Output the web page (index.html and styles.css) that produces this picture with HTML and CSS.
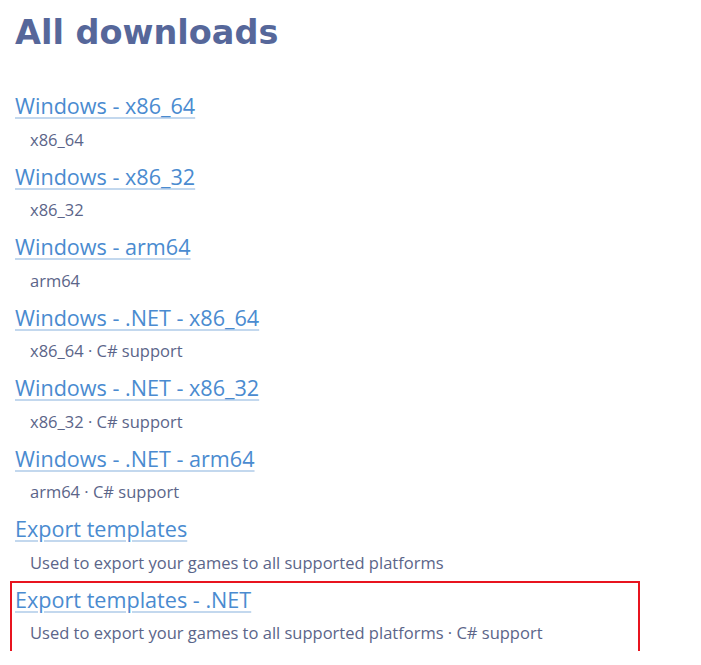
FILE: index.html
```html
<!DOCTYPE html>
<html lang="en">
<head>
<meta charset="utf-8">
<title>All downloads</title>
<link rel="stylesheet" href="styles.css">
</head>
<body>
<main class="page">
  <h1 class="title">All downloads</h1>
  <ul class="list">
    <li class="item"><a class="link" href="#">Windows - x86_64</a><div class="desc">x86_64</div></li>
    <li class="item"><a class="link" href="#">Windows - x86_32</a><div class="desc">x86_32</div></li>
    <li class="item"><a class="link" href="#">Windows - arm64</a><div class="desc">arm64</div></li>
    <li class="item"><a class="link" href="#">Windows - .NET - x86_64</a><div class="desc">x86_64 · C# support</div></li>
    <li class="item"><a class="link" href="#">Windows - .NET - x86_32</a><div class="desc">x86_32 · C# support</div></li>
    <li class="item"><a class="link" href="#">Windows - .NET - arm64</a><div class="desc">arm64 · C# support</div></li>
    <li class="item"><a class="link" href="#">Export templates</a><div class="desc">Used to export your games to all supported platforms</div></li>
    <li class="item item-highlight"><a class="link" href="#">Export templates - .NET</a><div class="desc">Used to export your games to all supported platforms · C# support</div></li>
  </ul>
</main>
</body>
</html>
```
FILE: styles.css
```css
html, body {
  margin: 0;
  padding: 0;
  background: #ffffff;
}
.page {
  padding: 0 0 0 15px;
  font-family: "Open Sans", "Noto Sans", sans-serif;
}
.title {
  margin: 13.4px 0 0 0;
  font-family: "DejaVu Sans", "Open Sans", sans-serif;
  font-weight: 700;
  font-size: 33.5px;
  line-height: 40px;
  color: #56679a;
}
.list {
  list-style: none;
  margin: 34.1px 0 0 -5px;
  padding: 0;
}
.item {
  width: 630px;
  box-sizing: border-box;
  border: 2px solid transparent;
  padding: 2px 3px 6.7px 3px;
  margin-bottom: -1.5px;
  display: flex;
  flex-direction: column;
  align-items: flex-start;
  gap: 7.3px;
}
.item-highlight {
  border-color: #e8141f;
}
.link {
  font-size: 21.6px;
  line-height: 30px;
  color: #4a8bd0;
  text-decoration: underline;
  text-decoration-color: #c3d8ee;
  text-decoration-thickness: 2px;
  text-underline-offset: 3px;
}
.desc {
  padding-left: 15px;
  font-size: 16.5px;
  line-height: 22px;
  color: #5b6589;
}
```
